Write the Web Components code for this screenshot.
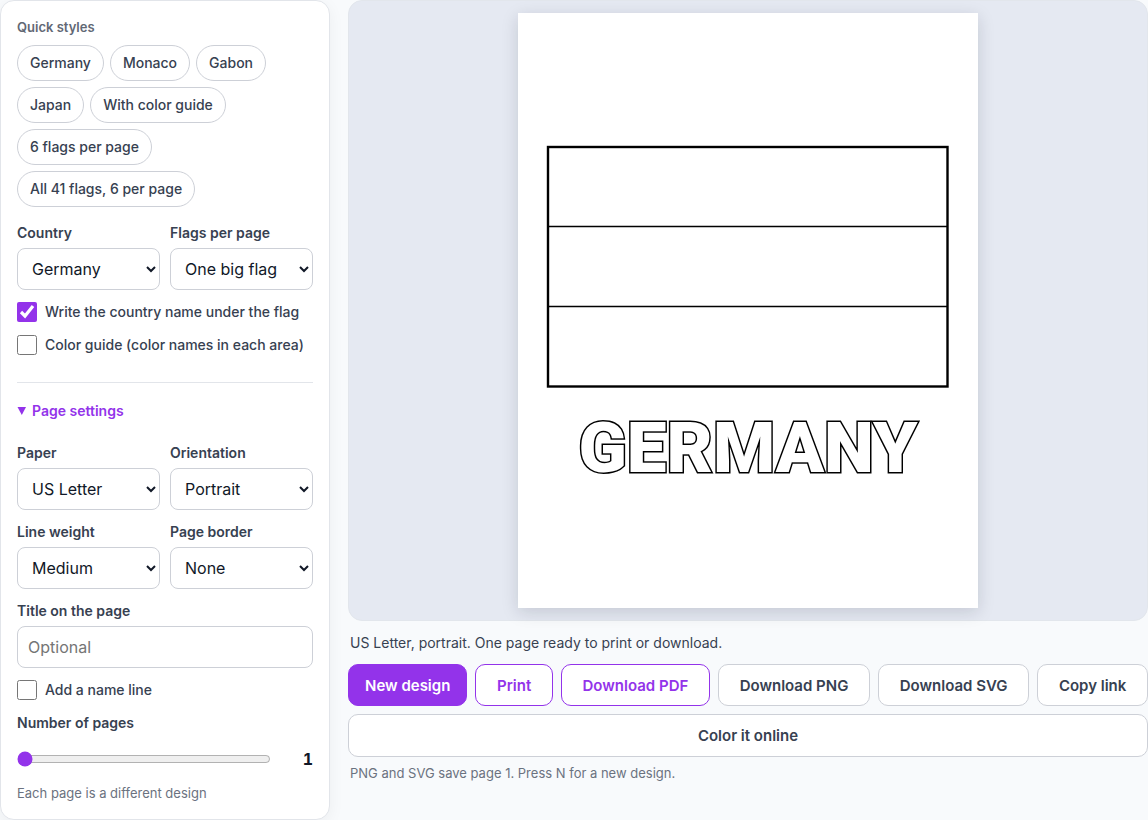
<!DOCTYPE html>
<html lang="en">
<head>
<meta charset="utf-8">
<meta name="viewport" content="width=device-width, initial-scale=1">
<title>Flag coloring pages</title>
<style>
  body {
    margin: 0;
    background: #f8fafc;
    color: #374151;
    font-family: Inter, "Liberation Sans", sans-serif;
    font-size: 14px;
    line-height: 20px;
  }
</style>
</head>
<body>
<flag-maker>
  <settings-panel slot="settings">
    <style-chip slot="chips">Germany</style-chip>
    <style-chip slot="chips">Monaco</style-chip>
    <style-chip slot="chips">Gabon</style-chip>
    <style-chip slot="chips">Japan</style-chip>
    <style-chip slot="chips">With color guide</style-chip>
    <style-chip slot="chips">6 flags per page</style-chip>
    <style-chip slot="chips">All 41 flags, 6 per page</style-chip>

    <field-grid slot="basic">
      <select-field label="Country" options="Germany|Monaco|Gabon|Japan"></select-field>
      <select-field label="Flags per page" options="One big flag|2 flags|6 flags"></select-field>
    </field-grid>
    <check-field slot="basic" checked>Write the country name under the flag</check-field>
    <check-field slot="basic">Color guide (color names in each area)</check-field>

    <field-grid slot="page">
      <select-field label="Paper" options="US Letter|A4"></select-field>
      <select-field label="Orientation" options="Portrait|Landscape"></select-field>
      <select-field label="Line weight" options="Medium|Thin|Thick"></select-field>
      <select-field label="Page border" options="None|Simple|Double"></select-field>
    </field-grid>
    <text-field slot="page" label="Title on the page" placeholder="Optional"></text-field>
    <check-field slot="page">Add a name line</check-field>
    <range-field slot="page" label="Number of pages" min="1" max="20" value="1">Each page is a different design</range-field>
  </settings-panel>

  <page-preview slot="preview" name="GERMANY"></page-preview>
  <action-bar slot="preview">
    <span slot="status">US Letter, portrait. One page ready to print or download.</span>
    <action-button variant="primary">New design</action-button>
    <action-button variant="accent">Print</action-button>
    <action-button variant="accent">Download PDF</action-button>
    <action-button>Download PNG</action-button>
    <action-button>Download SVG</action-button>
    <action-button>Copy link</action-button>
    <action-button variant="wide">Color it online</action-button>
    <span slot="hint">PNG and SVG save page 1. Press N for a new design.</span>
  </action-bar>
</flag-maker>

<script>
const BASE = `*, *::before, *::after { box-sizing: border-box; } :host { box-sizing: border-box; }`;

function define(name, render, ready) {
  customElements.define(name, class extends HTMLElement {
    constructor() {
      super();
      this.attachShadow({ mode: "open" });
    }
    connectedCallback() {
      this.shadowRoot.innerHTML = `<style>${BASE}</style>` + render(this);
      if (ready) ready(this);
    }
  });
}

define("flag-maker", () => `
  <style>
    :host { display: grid; grid-template-columns: 330px minmax(0, 1fr); gap: 18px; align-items: start; }
    @media (max-width: 760px) { :host { grid-template-columns: minmax(0, 1fr); } }
    main { min-width: 0; }
  </style>
  <slot name="settings"></slot>
  <main><slot name="preview"></slot></main>`);

define("settings-panel", () => `
  <style>
    :host {
      display: block; padding: 16px; background: #fff;
      border: 1px solid #e2e5ea; border-radius: 14px;
      box-shadow: 0 4px 16px rgba(15, 23, 42, .05);
    }
    h2 { margin: 0 0 8px; font-size: 13px; line-height: 20px; font-weight: 600; color: #616875; }
    .chips { display: flex; flex-wrap: wrap; gap: 6px; margin-bottom: 16px; }
    .stack { display: grid; gap: 12px; }
    details { margin-top: 26px; padding-top: 18px; border-top: 1px solid #e2e5ea; }
    summary {
      display: flex; align-items: center; gap: 5px; list-style: none; cursor: pointer;
      margin-bottom: 22px; font-weight: 600; color: #9333ea;
    }
    summary::-webkit-details-marker { display: none; }
    svg { width: 10px; height: 10px; fill: currentColor; }
    details:not([open]) svg { transform: rotate(-90deg); }
  </style>
  <h2>Quick styles</h2>
  <div class="chips"><slot name="chips"></slot></div>
  <div class="stack"><slot name="basic"></slot></div>
  <details open>
    <summary><svg viewBox="0 0 10 10" aria-hidden="true"><path d="M.5 1h8.5L4.8 9z"/></svg>Page settings</summary>
    <div class="stack"><slot name="page"></slot></div>
  </details>`);

define("style-chip", () => `
  <style>
    :host { display: block; }
    button {
      height: 36px; padding: 0 12px; border: 1px solid #cdd0d7; border-radius: 18px;
      background: #fff; color: #374151; font: 500 14px/20px Inter, sans-serif; cursor: pointer;
    }
  </style>
  <button type="button"><slot></slot></button>`);

define("field-grid", () => `
  <style>
    :host { display: grid; grid-template-columns: repeat(2, minmax(0, 1fr)); gap: 12px 10px; }
  </style>
  <slot></slot>`);

define("select-field", el => `
  <style>
    :host { display: block; }
    label { display: block; margin-bottom: 5px; font-weight: 600; }
    select {
      display: block; width: 100%; height: 42px; padding: 0 10px;
      border: 1px solid #cdd0d7; border-radius: 8px; background: #fff; color: #111827;
      font: 400 16px/24px Inter, sans-serif;
    }
  </style>
  <label for="control">${el.getAttribute("label")}</label>
  <select id="control">${el.getAttribute("options").split("|").map(o => `<option>${o}</option>`).join("")}</select>`);

define("text-field", el => `
  <style>
    :host { display: block; }
    label { display: block; margin-bottom: 5px; font-weight: 600; }
    input {
      display: block; width: 100%; height: 42px; padding: 0 10px;
      border: 1px solid #cdd0d7; border-radius: 8px; background: #fff; color: #111827;
      font: 400 16px/24px Inter, sans-serif;
    }
    input::placeholder { color: #757575; }
  </style>
  <label for="control">${el.getAttribute("label")}</label>
  <input id="control" type="text" placeholder="${el.getAttribute("placeholder")}">`);

define("check-field", el => `
  <style>
    :host { display: block; padding-bottom: 1px; }
    label { display: flex; align-items: center; gap: 8px; font-weight: 500; }
    input { flex: none; width: 20px; height: 20px; margin: 0; accent-color: #9333ea; }
  </style>
  <label><input type="checkbox" ${el.hasAttribute("checked") ? "checked" : ""}><span><slot></slot></span></label>`);

define("range-field", el => `
  <style>
    :host { display: block; }
    label { display: block; margin-bottom: 5px; font-weight: 600; }
    .row { display: flex; align-items: center; gap: 10px; height: 42px; }
    input { flex: 1; min-width: 0; margin: 0; accent-color: #9333ea; }
    output {
      width: 32px; text-align: right; font-size: 16px; font-weight: 700;
      font-variant-numeric: tabular-nums; color: #111827;
    }
    p { margin: 4px 0 0; font-size: 13px; line-height: 19px; color: #6b7280; }
  </style>
  <label for="control">${el.getAttribute("label")}</label>
  <div class="row">
    <input id="control" type="range" min="${el.getAttribute("min")}" max="${el.getAttribute("max")}" value="${el.getAttribute("value")}">
    <output for="control">${el.getAttribute("value")}</output>
  </div>
  <p><slot></slot></p>`, el => {
    const input = el.shadowRoot.querySelector("input");
    const output = el.shadowRoot.querySelector("output");
    input.addEventListener("input", () => { output.textContent = input.value; });
  });

define("page-preview", el => `
  <style>
    :host {
      display: block; padding: 12px; background: #e5e9f2;
      border: 1px solid #e2e6ec; border-radius: 14px;
    }
    svg {
      display: block; width: 100%; max-width: 460px; margin: 0 auto; background: #fff;
      box-shadow: 0 4px 16px rgba(15, 23, 42, .15);
    }
    text {
      font-family: Roboto, sans-serif; font-weight: 900; font-size: 71px; text-anchor: middle;
      fill: #fff; stroke: #000; stroke-width: 3; paint-order: stroke;
    }
  </style>
  <svg viewBox="0 0 460 595" role="img" aria-label="Coloring page preview">
    <rect x="30" y="134" width="399.5" height="239.5" fill="#fff" stroke="#000" stroke-width="2.4"/>
    <path d="M30 213.5h399.5M30 293.5h399.5" stroke="#000" stroke-width="1.5"/>
    <text x="230" y="459">${el.getAttribute("name")}</text>
  </svg>`);

define("action-bar", () => `
  <style>
    :host { display: block; }
    p { margin: 12px 2px 11px; }
    .actions { display: flex; flex-wrap: wrap; gap: 8px; }
    .hint { margin: 7px 2px 0; font-size: 13px; line-height: 19px; color: #6b7280; }
  </style>
  <p role="status"><slot name="status"></slot></p>
  <div class="actions"><slot></slot></div>
  <p class="hint"><slot name="hint"></slot></p>`);

define("action-button", () => `
  <style>
    :host { display: block; flex: 1 1 auto; }
    :host([variant="primary"]) { flex: none; }
    :host([variant="wide"]) { flex-basis: 100%; }
    button {
      width: 100%; height: 42px; padding: 0 16px; border: 1px solid #cdd0d7; border-radius: 10px;
      background: #fff; color: #374151; font: 600 15px/23px Inter, sans-serif;
      white-space: nowrap; cursor: pointer;
    }
    :host([variant="wide"]) button { height: 43px; }
    :host([variant="accent"]) button { border-color: #9333ea; color: #9333ea; }
    :host([variant="primary"]) button { border-color: #9333ea; background: #9333ea; color: #fff; }
  </style>
  <button type="button"><slot></slot></button>`);
</script>
</body>
</html>
